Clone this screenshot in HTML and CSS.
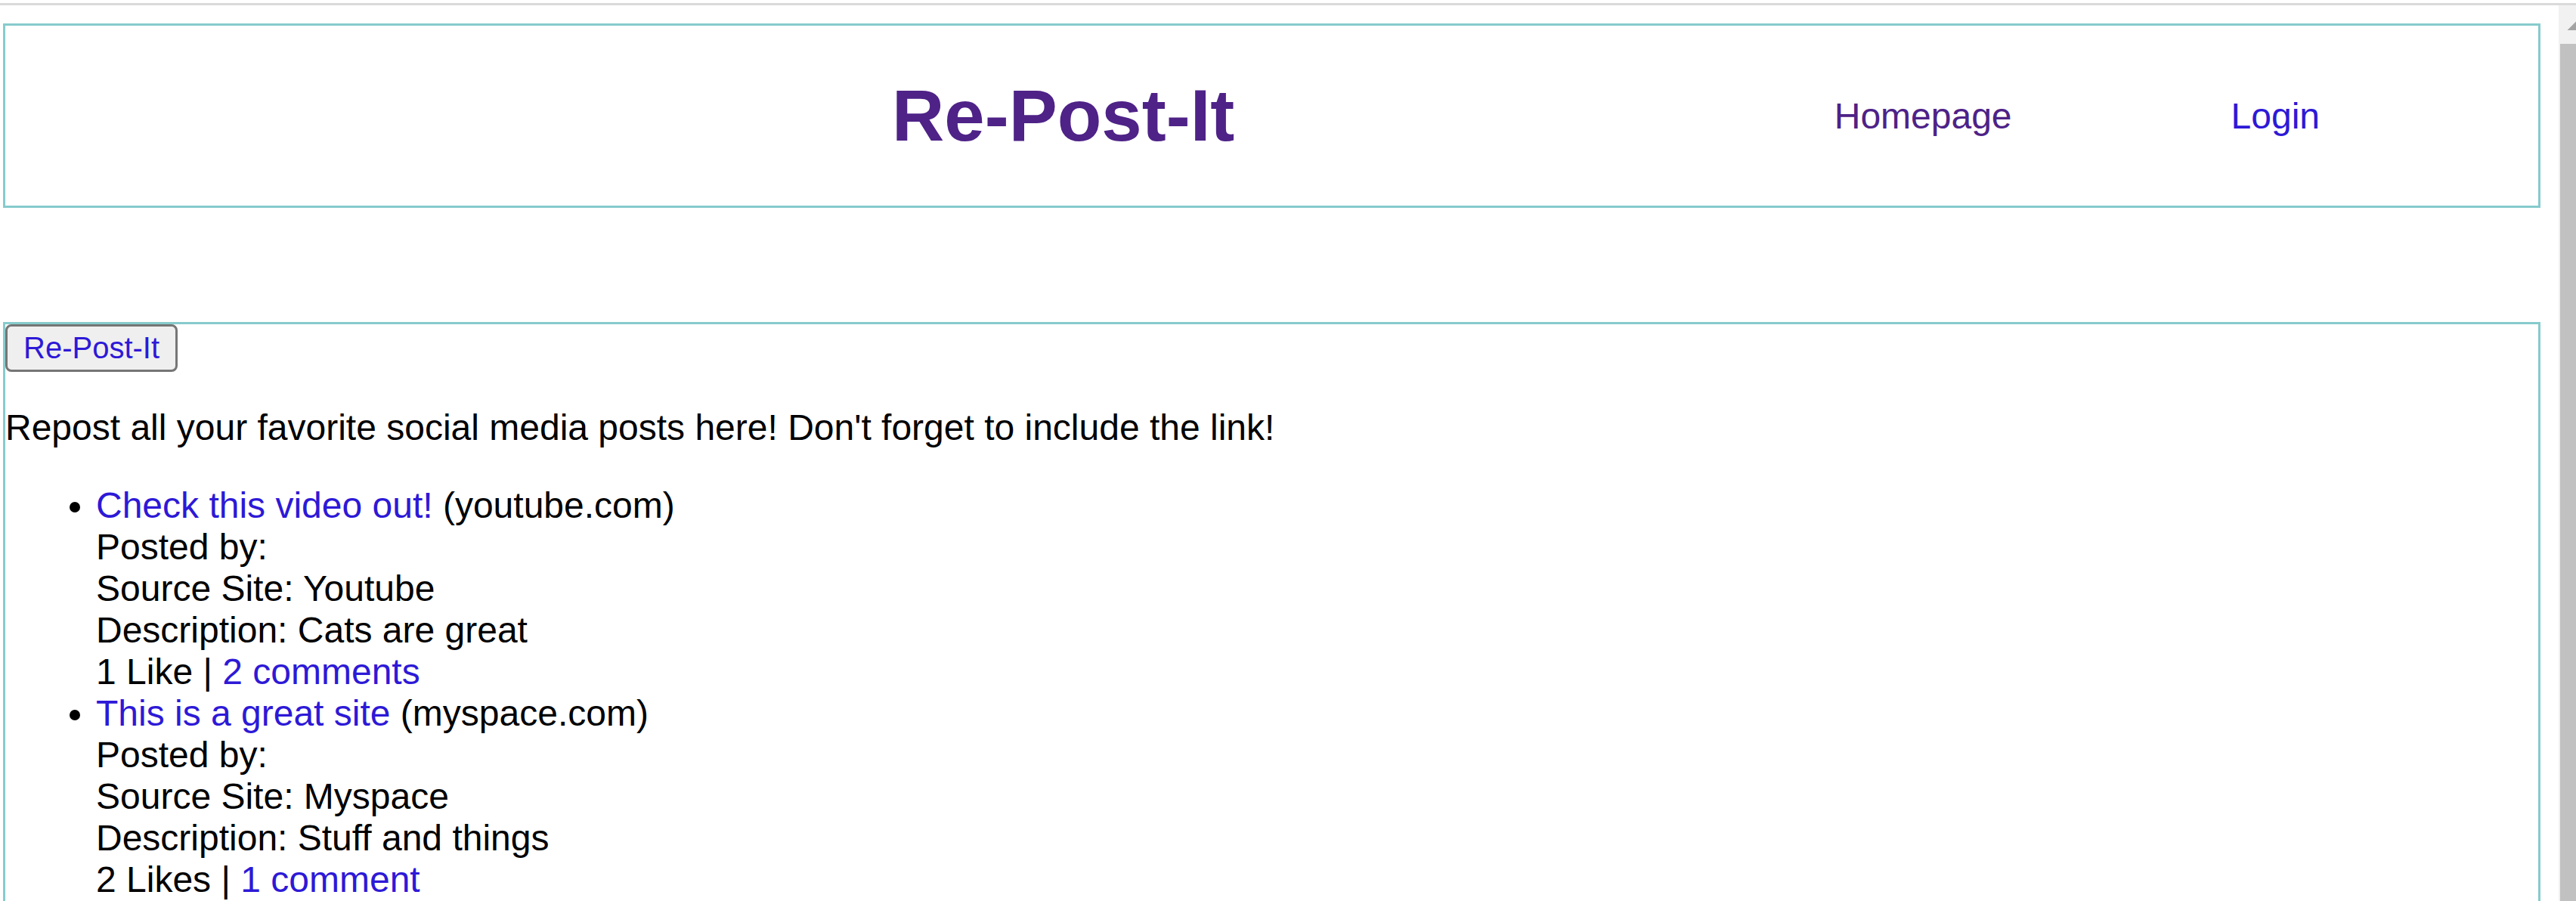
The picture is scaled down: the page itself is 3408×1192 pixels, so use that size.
FILE: index.html
```html
<!DOCTYPE html>
<html lang="en">
<head>
<meta charset="utf-8">
<title>Re-Post-It</title>
<link rel="stylesheet" href="styles.css">
</head>
<body>
<div class="topline"></div>
<div class="window">
  <div class="page">
    <header class="site-header">
      <h1 class="site-title">Re-Post-It</h1>
      <nav class="site-nav">
        <a class="nav-link visited" href="#">Homepage</a>
        <a class="nav-link" href="#">Login</a>
      </nav>
    </header>

    <main class="content">
      <div class="toolbar">
        <button class="repost-btn" type="button">Re-Post-It</button>
      </div>
      <p class="intro">Repost all your favorite social media posts here! Don't forget to include the link!</p>
      <ul class="posts">
        <li>
          <a class="link" href="#">Check this video out!</a> (youtube.com)<br>
          Posted by:<br>
          Source Site: Youtube<br>
          Description: Cats are great<br>
          1 Like | <a class="link" href="#">2 comments</a>
        </li>
        <li>
          <a class="link" href="#">This is a great site</a> (myspace.com)<br>
          Posted by:<br>
          Source Site: Myspace<br>
          Description: Stuff and things<br>
          2 Likes | <a class="link" href="#">1 comment</a>
        </li>
      </ul>
    </main>
  </div>
  <div class="scrollbar">
    <div class="sb-button">
      <svg class="sb-arrow" width="23" height="51" viewBox="0 0 23 51"><polygon points="11.5,33 24,20.5 36.5,33" fill="#a3a3a3"/></svg>
    </div>
    <div class="sb-thumb"></div>
  </div>
</div>
</body>
</html>
```

FILE: styles.css
```css
html, body {
  margin: 0;
  padding: 0;
  background: #ffffff;
  overflow: hidden;
}

body {
  font-family: "Liberation Sans", Arial, sans-serif;
  color: #000000;
  height: 1192px;
  display: flex;
  flex-direction: column;
}

.topline {
  height: 4px;
  border-bottom: 3px solid #dadada;
  background: #ffffff;
  flex: none;
}

.window {
  flex: 1;
  display: flex;
  min-height: 0;
}

.page {
  flex: 1;
  min-width: 0;
  overflow: hidden;
  padding: 24px 24px 0 4px;
}

/* header */
.site-header {
  box-sizing: border-box;
  height: 244px;
  border: 3px solid #87cbcd;
  display: flex;
  align-items: center;
  padding-left: 1173px;
  padding-right: 289px;
}

.site-title {
  margin: 0;
  font-size: 96px;
  font-weight: bold;
  color: #4e2287;
  line-height: 110px;
}

.site-nav {
  margin-left: auto;
  display: flex;
  gap: 290px;
}

.nav-link {
  font-size: 48px;
  line-height: 55px;
  color: #2d19d7;
  text-decoration: none;
}

.nav-link.visited {
  color: #4e2287;
}

/* content box */
.content {
  margin-top: 151px;
  border: 3px solid #87cbcd;
  font-size: 48px;
  line-height: 55px;
  min-height: 1200px;
}

.toolbar {
  display: flex;
}

.repost-btn {
  font-family: "Liberation Sans", Arial, sans-serif;
  font-size: 40px;
  line-height: 46px;
  color: #2d19d7;
  background: #efefef;
  border: 3px solid #767676;
  border-radius: 8px;
  padding: 5px 21px 6px;
  margin: 0;
}

.intro {
  margin: 46px 0 48px;
  padding-left: 0;
}

.posts {
  margin: 48px 0;
  padding-left: 120px;
}

.link {
  color: #2d19d7;
  text-decoration: none;
}

/* fake scrollbar */
.scrollbar {
  width: 23px;
  flex: none;
  background: #f1f1f1;
  display: flex;
  flex-direction: column;
}

.sb-button {
  height: 51px;
  flex: none;
}

.sb-arrow {
  display: block;
}

.sb-thumb {
  flex: 1;
  margin-left: 2px;
  background: #c1c1c1;
}
```
